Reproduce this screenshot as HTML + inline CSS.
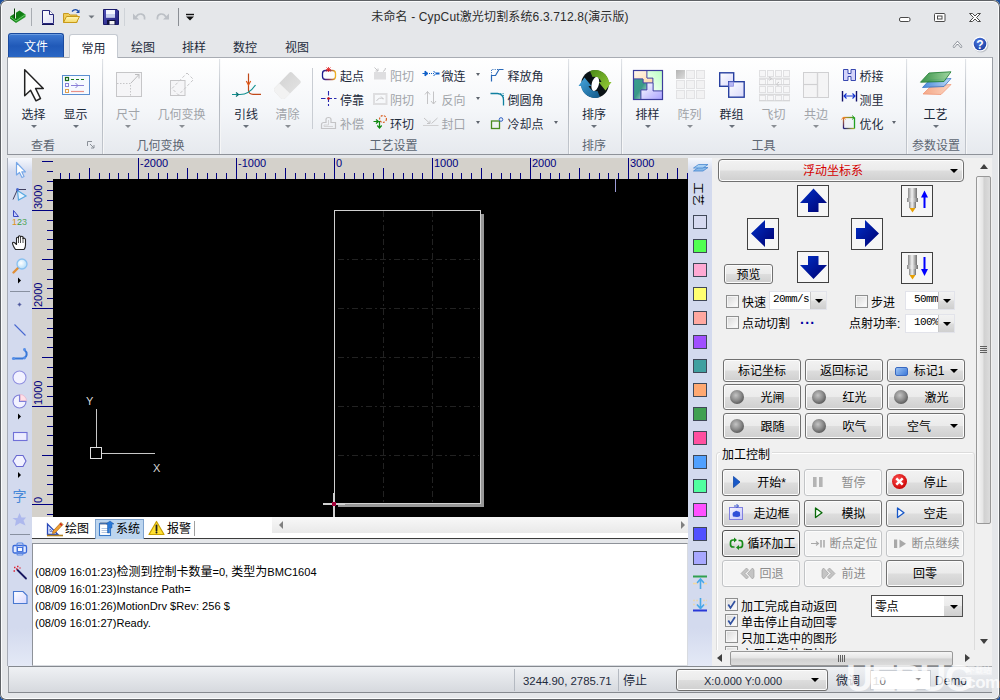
<!DOCTYPE html>
<html lang="zh-CN">
<head>
<meta charset="utf-8">
<title>未命名 - CypCut激光切割系统6.3.712.8(演示版)</title>
<style>
*{box-sizing:border-box;margin:0;padding:0}
html,body{width:1000px;height:700px;overflow:hidden}
body{position:relative;background:#1c4f9c;font-family:"Liberation Sans","Noto Sans CJK SC",sans-serif;font-size:12px;color:#1e2b3c;line-height:1}
.abs{position:absolute}
svg{display:block;overflow:visible}
#win{position:absolute;left:0;top:0;width:1000px;height:700px;background:#e5e7ea;border-radius:7px 7px 6px 6px;box-shadow:inset 0 0 0 1px #5f6266,inset 0 0 0 2px #fbfcfd}
#title{position:absolute;left:0;top:11px;width:1000px;text-align:center;font-size:12px;color:#2c2c2c;letter-spacing:.15px;white-space:nowrap}
.tab{position:absolute;top:34px;height:24px;width:48px;text-align:center;font-size:12px;line-height:28px;color:#1e2b3c;white-space:nowrap}
#tab-file{left:8px;top:33px;width:56px;height:25px;background:linear-gradient(#3f7ad2,#2059b8 50%,#2b68c6);border:1px solid #1a4a9e;border-bottom:none;border-radius:3px 3px 0 0;color:#fff;line-height:27px;box-shadow:inset 0 1px 0 #6a9be0}
#tab-home{z-index:2;left:69px;width:49px;background:#fff;border:1px solid #c5cad1;border-bottom:none;border-radius:3px 3px 0 0;height:24px}
#ribbon{position:absolute;left:7px;top:57px;width:986px;height:98px;background:linear-gradient(#ffffff,#f4f6f9 55%,#e6e9ee);border:1px solid #9a9ea5;border-top-color:#a8acb3;border-bottom-color:#8e9299}
.gsep{position:absolute;top:59px;width:2px;height:95px;background:linear-gradient(#e2e5e9,#b4b9c1 45%,#c2c6cd);border-right:1px solid rgba(255,255,255,.85)}
.glabel{position:absolute;top:139px;height:14px;text-align:center;font-size:12px;line-height:14px;color:#5d6672;white-space:nowrap}
.big{position:absolute;top:108px;height:14px;line-height:14px;text-align:center;font-size:12px;color:#1e2b3c;white-space:nowrap}
.dis{color:#a1a4a9 !important}
.arr{position:absolute;width:0;height:0;border:2.5px solid transparent;border-top:3px solid #5e646d;border-bottom:none}
.sm{position:absolute;height:14px;line-height:14px;font-size:12px;color:#1e2b3c;white-space:nowrap}
#ltool,#layerbar{position:absolute;top:158px;width:24px;height:508px;background:linear-gradient(#f6f8fd,#d3daee 14px,#d3daee 470px,#e4e9f6)}
#ltool{left:8px}
#layerbar{left:688px}
#tabsbar{position:absolute;left:32px;top:517px;width:656px;height:22px;background:#fff;border-bottom:1px solid #3c3c3c}
#log{position:absolute;left:32px;top:543px;width:656px;height:123px;background:#fff;border:1px solid #8e9299;border-right-color:#d8dbe0;border-bottom-color:#d8dbe0;font-size:11px;color:#000}
#log b{font-weight:normal;font-size:12px}
#log div{position:absolute;left:2px;font-size:11.1px;white-space:nowrap;height:13px;line-height:13px}
#rpanel{position:absolute;left:712px;top:158px;width:280px;height:508px;background:#f0f0f0;font-family:"Liberation Sans","Noto Sans CJK SC",sans-serif;color:#000}
#status{position:absolute;left:8px;top:666px;width:984px;height:27px;background:linear-gradient(#eff1f4,#d6d9de);border-top:1px solid #85898f;border-bottom:1px solid #85898f;border-left:1px solid #9a9ea4;color:#1e2b3c}
.btn{position:absolute;padding-top:1px;border:1px solid #707070;border-radius:3px;background:linear-gradient(#f2f2f2,#ebebeb 48%,#dddddd 52%,#cfcfcf);box-shadow:inset 0 0 0 1px #fcfcfc;text-align:center;font-size:12px;color:#000;white-space:nowrap}
.btn.off{border-color:#c2c4c6;background:#f4f4f4;color:#8c8c8c;box-shadow:inset 0 0 0 1px #fcfcfc}
.cb{position:absolute;width:13px;height:13px;border:1px solid #8e8f8f;background:linear-gradient(135deg,#d8d8d8,#ffffff);box-shadow:inset 0 0 0 1px #f4f4f4}
.lbl{position:absolute;font-size:12px;height:14px;line-height:14px;white-space:nowrap;color:#000}
.combo{position:absolute;background:#fff;border:1px solid #e2e3ea;font-family:"Liberation Mono",monospace;font-size:11px;letter-spacing:-0.6px;color:#000;white-space:nowrap;overflow:hidden}
.combo i{position:absolute;right:0;top:0;bottom:0;width:16px;background:linear-gradient(#f2f2f2,#ebebeb 48%,#dddddd 52%,#cfcfcf);border-left:1px solid #c8c8c8}
.dn{position:absolute;width:0;height:0;border:4px solid transparent;border-top:4px solid #000;border-bottom:none}
.sq{position:absolute;left:5px;width:14px;height:14px;border:1px solid #404858}
.jog{position:absolute;width:32px;height:32px;background:#f6f6f6;border:1px solid #404040}
.jog svg{position:absolute;left:-1px;top:-1px}
.led{position:absolute;width:14px;height:14px;border-radius:50%;background:radial-gradient(circle at 42% 38%,#c4c4c4,#8a8a8a 45%,#5a5a5a 75%,#484848)}
</style>
</head>
<body>
<div id="win">
<div id="title">未命名 - CypCut激光切割系统6.3.712.8(演示版)</div>
<div class="tab" id="tab-file">文件</div>
<div class="tab" id="tab-home">常用</div>
<div class="tab" style="left:119px">绘图</div>
<div class="tab" style="left:170px">排样</div>
<div class="tab" style="left:221px">数控</div>
<div class="tab" style="left:273px">视图</div>
<div id="ribbon"></div>
<!-- quick access toolbar + window controls -->
<svg class="abs" style="left:0;top:0" width="1000" height="58" viewBox="0 0 1000 58">
<defs>
<linearGradient id="gGreen" x1="0" y1="0" x2="1" y2="1"><stop offset="0" stop-color="#1e8a1e"/><stop offset=".5" stop-color="#0c7a10"/><stop offset="1" stop-color="#4cc04c"/></linearGradient>
<linearGradient id="gDoc" x1="0" y1="0" x2="1" y2="1"><stop offset="0" stop-color="#ffffff"/><stop offset="1" stop-color="#dcdcf4"/></linearGradient>
<linearGradient id="gFold" x1="0" y1="0" x2="0" y2="1"><stop offset="0" stop-color="#fff8b8"/><stop offset="1" stop-color="#f4d868"/></linearGradient>
<linearGradient id="gSave" x1="0" y1="0" x2="1" y2="1"><stop offset="0" stop-color="#5050b8"/><stop offset="1" stop-color="#20207a"/></linearGradient>
<radialGradient id="gHelp" cx=".4" cy=".3" r=".8"><stop offset="0" stop-color="#4a78e0"/><stop offset="1" stop-color="#1a3a9c"/></radialGradient>
</defs>
<!-- app icon -->
<path d="M10 16.500L19.500 10.500L25.500 14.500V17L16 23L10 18.500Z" fill="url(#gGreen)"/>
<path d="M10 16.500L16 21L25.500 14.500" fill="none" stroke="#7adc7a" stroke-width=".8"/>
<path d="M14.500 8.500V18" stroke="#0a3a0a" stroke-width="1"/><path d="M15.500 9V18.500" stroke="#e8f8e8" stroke-width="1"/>
<!-- sep -->
<path d="M31.500 8V26" stroke="#a8acb2"/>
<!-- new -->
<path d="M42.500 10.500H49.500L53.500 14.500V23.500H42.500Z" fill="url(#gDoc)" stroke="#26267a"/>
<path d="M49.500 10.500V14.500H53.500" fill="#fff" stroke="#26267a"/>
<path d="M42 24.500H54" stroke="#14145a"/>
<!-- open -->
<path d="M63.500 22.500V13.500H68.500L70 15H77V22.500Z" fill="#f0cc58" stroke="#c89a20"/>
<path d="M63.500 22.500L66.500 16.500H79.500L76.500 22.500Z" fill="url(#gFold)" stroke="#c89a18"/>
<path d="M72 11.500C74 9 77 9 78.500 11.500" fill="none" stroke="#1a4aa8" stroke-width="1.300"/><path d="M79.500 9.500V13H76Z" fill="#1a4aa8"/>
<path d="M88.500 15.500H94.500L91.500 18.500Z" fill="#70767e"/>
<!-- save -->
<path d="M103.500 9.500H117L118.500 11V24.500H103.500Z" fill="url(#gSave)" stroke="#1a1a6a"/>
<rect x="106" y="10" width="9" height="7.500" fill="#f4f6ff"/><path d="M106 14h9v3.500h-9z" fill="#c8d0f0"/>
<rect x="107" y="20" width="8.500" height="4.500" fill="#10103a"/><rect x="109.500" y="21" width="5" height="3.500" fill="#f4f4f4"/>
<!-- sep light -->
<path d="M124.500 8V26" stroke="#cfd3d8"/>
<!-- undo -->
<path d="M136 17C138.500 12.500 145.500 13 144.500 19.500" fill="none" stroke="#bcc0c6" stroke-width="1.700"/><path d="M133 13.500V19.500H139Z" fill="#bcc0c6"/>
<!-- redo -->
<path d="M166 17C163.500 12.500 156.500 13 157.500 19.500" fill="none" stroke="#bcc0c6" stroke-width="1.700"/><path d="M169 13.500V19.500H163Z" fill="#bcc0c6"/>
<!-- sep -->
<path d="M178.500 8V26" stroke="#8a8e94"/>
<!-- customize -->
<path d="M186 14.500H194" stroke="#111" stroke-width="1.400"/><path d="M186 16.500H194L190 20.500Z" fill="#111"/>
<!-- window controls -->
<rect x="899.500" y="17.500" width="10.500" height="4" rx="1.500" fill="#fff" stroke="#4a4a4a"/>
<rect x="934.500" y="13.500" width="10.500" height="8" rx="1" fill="#fff" stroke="#4a4a4a"/><rect x="937.500" y="16" width="4.500" height="3" fill="#fff" stroke="#4a4a4a"/>
<path d="M969.500 13.500H972.500L975 16L977.500 13.500H980.500L976.500 17.500L980.500 21.500H977.500L975 19L972.500 21.500H969.500L973.500 17.500Z" fill="#fff" stroke="#4a4a4a" stroke-linejoin="round"/>
<!-- collapse -->
<path d="M954 46.500L957.500 42.500L961 46.500" fill="none" stroke="#8a9098" stroke-width="2.600" stroke-linejoin="round" stroke-linecap="round"/><path d="M954 46.500L957.500 42.500L961 46.500" fill="none" stroke="#fff" stroke-width="1.100" stroke-linejoin="round" stroke-linecap="round"/>
<!-- help -->
<circle cx="981" cy="45" r="7.500" fill="#9aa0aa" opacity=".5"/>
<circle cx="980" cy="44" r="7.500" fill="#fff"/><circle cx="980" cy="44" r="6.300" fill="url(#gHelp)"/>
<text x="980" y="48.500" text-anchor="middle" font-family="Liberation Sans, sans-serif" font-weight="bold" font-size="12" fill="#fff">?</text>
</svg>
<div class="gsep" style="left:102px"></div>
<div class="gsep" style="left:219px"></div>
<div class="gsep" style="left:568px"></div>
<div class="gsep" style="left:621px"></div>
<div class="gsep" style="left:906px"></div>
<div class="gsep" style="left:965px"></div>
<div class="abs" style="left:312px;top:68px;width:1px;height:61px;background:#c9cdd3"></div>
<div class="glabel" style="left:3px;width:80px">查看</div>
<div class="glabel" style="left:120.5px;width:80px">几何变换</div>
<div class="glabel" style="left:353.5px;width:80px">工艺设置</div>
<div class="glabel" style="left:554px;width:80px">排序</div>
<div class="glabel" style="left:723.5px;width:80px">工具</div>
<div class="glabel" style="left:896px;width:80px">参数设置</div>
<div class="big" style="left:-1.5px;width:70px">选择</div>
<div class="arr" style="left:30.5px;top:125px;border-width:3px 3px 0 3px;border-top-color:#6a717b"></div>
<div class="big" style="left:40.5px;width:70px">显示</div>
<div class="arr" style="left:72.5px;top:125px;border-width:3px 3px 0 3px;border-top-color:#6a717b"></div>
<div class="big dis" style="left:93px;width:70px">尺寸</div>
<div class="arr" style="left:125px;top:125px;border-width:3px 3px 0 3px;border-top-color:#8a8e94"></div>
<div class="big dis" style="left:146.5px;width:70px">几何变换</div>
<div class="arr" style="left:178.5px;top:125px;border-width:3px 3px 0 3px;border-top-color:#8a8e94"></div>
<div class="big" style="left:211px;width:70px">引线</div>
<div class="arr" style="left:243px;top:125px;border-width:3px 3px 0 3px;border-top-color:#6a717b"></div>
<div class="big dis" style="left:252.5px;width:70px">清除</div>
<div class="arr" style="left:284.5px;top:125px;border-width:3px 3px 0 3px;border-top-color:#8a8e94"></div>
<div class="big" style="left:559px;width:70px">排序</div>
<div class="arr" style="left:591px;top:125px;border-width:3px 3px 0 3px;border-top-color:#6a717b"></div>
<div class="big" style="left:612.5px;width:70px">排样</div>
<div class="arr" style="left:644.5px;top:125px;border-width:3px 3px 0 3px;border-top-color:#6a717b"></div>
<div class="big dis" style="left:654.5px;width:70px">阵列</div>
<div class="arr" style="left:686.5px;top:125px;border-width:3px 3px 0 3px;border-top-color:#8a8e94"></div>
<div class="big" style="left:696.5px;width:70px">群组</div>
<div class="arr" style="left:728.5px;top:125px;border-width:3px 3px 0 3px;border-top-color:#6a717b"></div>
<div class="big dis" style="left:738.5px;width:70px">飞切</div>
<div class="arr" style="left:770.5px;top:125px;border-width:3px 3px 0 3px;border-top-color:#8a8e94"></div>
<div class="big dis" style="left:781px;width:70px">共边</div>
<div class="arr" style="left:813px;top:125px;border-width:3px 3px 0 3px;border-top-color:#8a8e94"></div>
<div class="big" style="left:900.5px;width:70px">工艺</div>
<div class="arr" style="left:932.5px;top:125px;border-width:3px 3px 0 3px;border-top-color:#6a717b"></div>
<div class="sm" style="left:340px;top:70px">起点</div>
<div class="sm" style="left:340px;top:94px">停靠</div>
<div class="sm dis" style="left:340px;top:118px">补偿</div>
<div class="sm dis" style="left:390px;top:70px">阳切</div>
<div class="sm dis" style="left:390px;top:94px">阴切</div>
<div class="sm" style="left:390px;top:118px">环切</div>
<div class="sm" style="left:441.5px;top:70px">微连</div>
<div class="arr" style="left:476px;top:73px"></div>
<div class="sm dis" style="left:441.5px;top:94px">反向</div>
<div class="arr" style="left:476px;top:97px"></div>
<div class="sm dis" style="left:441.5px;top:118px">封口</div>
<div class="arr" style="left:476px;top:121px"></div>
<div class="sm" style="left:507.5px;top:70px">释放角</div>
<div class="sm" style="left:507.5px;top:94px">倒圆角</div>
<div class="sm" style="left:507.5px;top:118px">冷却点</div>
<div class="arr" style="left:554px;top:121px"></div>
<div class="sm" style="left:859.5px;top:70px">桥接</div>
<div class="sm" style="left:859.5px;top:94px">测里</div>
<div class="sm" style="left:859.5px;top:118px">优化</div>
<div class="arr" style="left:892px;top:121px"></div>
<svg class="abs" style="left:87px;top:141px" width="8" height="8" viewBox="0 0 8 8"><path d="M0.500 5V0.500H5" stroke="#8a9098" fill="none"/><path d="M3 3L7 7M7 4V7H4" stroke="#8a9098" fill="none"/></svg>
<svg class="abs" style="left:0;top:58px" width="1000" height="96" viewBox="0 58 1000 96">
<defs>
<linearGradient id="rStart" x1="0" y1="0" x2="1" y2="0"><stop offset="0" stop-color="#1a1a90"/><stop offset=".5" stop-color="#803060"/><stop offset="1" stop-color="#f0b020"/></linearGradient>
<linearGradient id="rEr" x1="0" y1="0" x2="1" y2="1"><stop offset="0" stop-color="#d0d0d0"/><stop offset="1" stop-color="#e6e6e6"/></linearGradient>
<linearGradient id="rPeach" x1="1" y1="1" x2="0" y2="0"><stop offset="0" stop-color="#ffd8a8"/><stop offset="1" stop-color="#fff8f0"/></linearGradient>
<linearGradient id="rLg" x1="1" y1="0" x2="0" y2="1"><stop offset="0" stop-color="#b8ffc0"/><stop offset="1" stop-color="#ffffff"/></linearGradient>
<linearGradient id="rTeal" x1="0" y1="0" x2="1" y2="1"><stop offset="0" stop-color="#38a090"/><stop offset=".5" stop-color="#3a9888"/><stop offset="1" stop-color="#d8f0e8"/></linearGradient>
<linearGradient id="rLav" x1="1" y1="1" x2="0" y2="0"><stop offset="0" stop-color="#a8a0ff"/><stop offset="1" stop-color="#ffffff"/></linearGradient>
<linearGradient id="rGrp" x1="0" y1="0" x2="1" y2="1"><stop offset="0" stop-color="#ffffff"/><stop offset="1" stop-color="#d8d8fa"/></linearGradient>
<linearGradient id="rArr" x1="0" y1="0" x2="1" y2="1"><stop offset="0" stop-color="#b4b4b4"/><stop offset="1" stop-color="#dcdcdc"/></linearGradient>
<linearGradient id="rOptT" gradientUnits="userSpaceOnUse" x1="843" y1="0" x2="855" y2="0"><stop offset="0" stop-color="#f08020"/><stop offset="1" stop-color="#20a020"/></linearGradient>
<linearGradient id="rOptL" gradientUnits="userSpaceOnUse" x1="0" y1="117" x2="0" y2="129"><stop offset="0" stop-color="#f08020"/><stop offset="1" stop-color="#101080"/></linearGradient>
<linearGradient id="rOptB" gradientUnits="userSpaceOnUse" x1="843" y1="0" x2="855" y2="0"><stop offset="0" stop-color="#101080"/><stop offset="1" stop-color="#c0c020"/></linearGradient>
<linearGradient id="rGre" x1="0" y1="0" x2="1" y2="0"><stop offset="0" stop-color="#2a8a3a"/><stop offset="1" stop-color="#9ad49a"/></linearGradient>
<linearGradient id="rBlu" x1="0" y1="0" x2="1" y2="0"><stop offset="0" stop-color="#3a80d8"/><stop offset="1" stop-color="#b8d8f8"/></linearGradient>
<linearGradient id="rSal" x1="0" y1="0" x2="1" y2="0"><stop offset="0" stop-color="#f4a888"/><stop offset="1" stop-color="#fcd4c0"/></linearGradient>
<linearGradient id="rSortG" x1="0" y1="0" x2="1" y2="1"><stop offset="0" stop-color="#4a8a18"/><stop offset="1" stop-color="#9ad038"/></linearGradient>
<linearGradient id="rSortB" x1="0" y1="0" x2="1" y2="1"><stop offset="0" stop-color="#48a8e0"/><stop offset="1" stop-color="#105888"/></linearGradient>
</defs>
<!-- select cursor -->
<path d="M24.700 69.700V95.800L30.600 90.300L36 100.800L40.500 98.500L35.600 88.500H43.300Z" fill="#fff" stroke="#222" stroke-width="1.500" stroke-linejoin="round"/>
<!-- display -->
<rect x="62.500" y="75.500" width="27" height="19" fill="#f6faff" stroke="#5b8fd0"/>
<rect x="65.500" y="77.500" width="3" height="3" fill="none" stroke="#1a6a1a" stroke-width="1.200"/><path d="M71 79.500H84" stroke="#1a7a1a" stroke-width="1.200" stroke-dasharray="3 2"/>
<rect x="65.500" y="83.500" width="3" height="3" fill="none" stroke="#8a80d8"/><path d="M71 85.500H84M75.500 83L78 85.500L75.500 88" stroke="#8a80d8" fill="none"/>
<rect x="65.500" y="89.500" width="3" height="3" fill="none" stroke="#e0a050"/><path d="M71 91.500H84" stroke="#e89088" stroke-width="1.200"/>
<!-- size (disabled) -->
<rect x="116.500" y="72.500" width="25" height="24" fill="#f5f5f7" stroke="#c6c6c8"/>
<path d="M117 83.500H130.500V96" fill="none" stroke="#c6c6c8" stroke-dasharray="1.500 1.500"/>
<path d="M131 83L139 74.500M135 74.500H139V78.500" fill="none" stroke="#bcbcbe"/>
<!-- geometric transform (disabled) -->
<rect x="170.500" y="80.500" width="14.500" height="15" fill="#f5f5f7" stroke="#c6c6c8"/>
<path d="M187 73L193.500 79.500L178.500 95L172 88.500Z" fill="none" stroke="#c6c6c8" stroke-dasharray="3 2"/>
<!-- lead line -->
<path d="M248.500 73.500V90.500Q249 94.300 253 94.300H261" fill="none" stroke="#c04818" stroke-width="1.200"/><path d="M246.300 81L248.500 85L250.700 81" fill="none" stroke="#e05818" stroke-width="1.200"/>
<path d="M232 94.500H240Q249 94.500 255.500 85" fill="none" stroke="#109090" stroke-width="1.200"/><path d="M236 92.500L238.500 94.500L236 96.500" fill="none" stroke="#0a7070" stroke-width="1.200"/>
<!-- eraser (disabled) -->
<path d="M289.500 72.600Q290.800 71.400 292 72.600L300.300 80.800Q301.500 82 300.300 83.200L285.500 98Q283 100 280.500 98L275 92Q273 89.500 275 87.500Z" fill="url(#rEr)"/>
<path d="M279.300 83.200L290 93.600L285.500 98Q283 100 280.500 98L275 92Q273 89.500 275 87.500Z" fill="#f2f2f2"/>
<!-- start point -->
<rect x="322.500" y="70.500" width="13" height="9" rx="3" fill="none" stroke="url(#rStart)" stroke-width="1.300"/>
<path d="M326.500 67.500L330.500 71.500M330.500 67.500L326.500 71.500M328.500 67V72M326 69.500H331" stroke="#e02020" stroke-width=".8"/>
<!-- dock -->
<path d="M321 98.500H336.500M328.500 91V106" stroke="#2828b0" stroke-width="1.100" stroke-dasharray="4.500 2"/><circle cx="328.500" cy="98.500" r="1.300" fill="#d01010"/>
<!-- compensate (disabled) -->
<path d="M321.500 128.500V124.500Q321.500 122.500 324 122.500H326V119.500Q326 117.500 328.500 117.500Q331 117.500 331 119.500V122.500H335.500V128.500Z" fill="none" stroke="#c4c4c6" stroke-width="1.200"/>
<path d="M324 126.500V125H328.500V120M333 126.500H324" fill="none" stroke="#d4d4d6" stroke-width="1"/>
<!-- outer cut (disabled) -->
<rect x="374" y="72" width="12" height="7.500" fill="#dedee0"/><path d="M374.500 67.500L378 71M378 68.500V71H375.500M383 71.500Q385.500 70.500 385.500 68" fill="none" stroke="#c4c4c6"/>
<!-- inner cut (disabled) -->
<rect x="374" y="94" width="12.500" height="10" fill="none" stroke="#dedee0" stroke-width="2"/><path d="M376.500 101Q379 96.500 383.500 99M381 96.500L383.500 99" fill="none" stroke="#c8c8ca"/>
<!-- ring cut -->
<circle cx="383" cy="119" r="3.400" fill="none" stroke="#d85818" stroke-width="1.100" stroke-dasharray="2 1.300"/>
<path d="M373.500 121.500H378M376 119.500L378.500 121.500L376 123.500M379.500 121V127.500M377.300 125.500L379.500 128L381.700 125.500" fill="none" stroke="#108a10" stroke-width="1.200"/>
<!-- micro joint -->
<path d="M422.500 73.500H425M425 71L428 73.500L425 76Z" fill="#1060c8" stroke="#1060c8"/><path d="M429 73.500H434" stroke="#1060c8" stroke-dasharray="1 1"/><path d="M433.500 71L436 73.500L433.500 76" fill="none" stroke="#1060c8"/><path d="M436 73.500H439.500" stroke="#1060c8" stroke-width="2"/>
<!-- reverse (disabled) -->
<path d="M427.500 104V91.500M425 94.500L427.500 91.500L430 94.500M433.500 91.500V104M431 101L433.500 104L436 101" fill="none" stroke="#c4c4c6"/>
<!-- seal (disabled) -->
<path d="M423 125.500H438.500" stroke="#d0d0d2"/><path d="M424 118L430 123.500M430 120.500V123.500H427M437.500 118L431.500 123.500" fill="none" stroke="#c4c4c6"/>
<!-- release angle -->
<path d="M491.500 75.500V69.500H499" fill="none" stroke="#2868b8" stroke-dasharray="1 1.300"/><path d="M491.500 81.500V75.500H495.500L499 69.500H503.500" fill="none" stroke="#2868b8" stroke-width="1.200"/>
<!-- fillet -->
<path d="M498 93.500H503.500V99" fill="none" stroke="#1888a8" stroke-dasharray="1 1.300"/><path d="M490.500 93.500H497.500Q503.500 94 503.500 100V105.500" fill="none" stroke="#1080a0" stroke-width="1.300"/>
<!-- cooling point -->
<rect x="491.500" y="121" width="8" height="7.500" fill="none" stroke="#4a8a20" stroke-width="1.300"/><circle cx="501" cy="119.500" r="1.800" fill="#e8f0ff" stroke="#3060c0"/>
<!-- sort -->
<circle cx="595" cy="84" r="13.800" fill="#0a1216"/>
<path d="M590 71A14 14 0 0 1 609 82H611.500L605.500 90.500L598.500 82H601.500A8 8 0 0 0 592.500 77Z" fill="url(#rSortG)"/>
<path d="M600 97A14 14 0 0 1 581 86H578.500L584.500 77.500L591.500 86H588.500A8 8 0 0 0 597.500 91Z" fill="url(#rSortB)"/>
<ellipse cx="595.300" cy="84" rx="3.600" ry="7.200" fill="#fff" transform="rotate(14 595.300 84)"/>
<!-- nest -->
<rect x="633.500" y="70.500" width="29" height="29" fill="#fff"/>
<path d="M633.500 70.500H647V78H653V83H643V79H633.500Z" fill="url(#rPeach)" stroke="#4848a8" stroke-width=".8"/>
<path d="M647 70.500H662.500V91H653V78H647Z" fill="url(#rLg)" stroke="#4848a8" stroke-width=".8"/>
<path d="M633.500 79H643V83H647V90H641V99.500H633.500Z" fill="url(#rTeal)" stroke="#4848a8" stroke-width=".8"/>
<path d="M647 83H653V91H662.500V99.500H641V90H647Z" fill="url(#rLav)" stroke="#4848a8" stroke-width=".8"/>
<rect x="633.500" y="70.500" width="29" height="29" fill="none" stroke="#3c3c9c" stroke-width="1.200"/>
<!-- array (disabled) -->
<g fill="#f2f2f3" stroke="#e2e2e4"><rect x="686.500" y="70.500" width="8" height="8"/><rect x="696.500" y="70.500" width="8" height="8"/><rect x="676.500" y="80.500" width="8" height="8"/><rect x="686.500" y="80.500" width="8" height="8"/><rect x="696.500" y="80.500" width="8" height="8"/><rect x="676.500" y="90.500" width="8" height="8"/><rect x="686.500" y="90.500" width="8" height="8"/><rect x="696.500" y="90.500" width="8" height="8"/></g>
<rect x="676" y="70" width="9" height="9" fill="url(#rArr)"/>
<!-- group -->
<rect x="719.700" y="72.800" width="14" height="13.500" fill="url(#rGrp)" stroke="#2840a0" stroke-width="1.400"/>
<rect x="728.700" y="81.700" width="15.500" height="15.500" fill="url(#rGrp)" stroke="#2840a0" stroke-width="1.400"/>
<rect x="729" y="82" width="4.500" height="4.200" fill="#b8b8f4" stroke="#8888e0" stroke-width=".8"/>
<!-- fly cut (disabled) -->
<g fill="#f6f6f7" stroke="#e0e0e2"><rect x="759.500" y="70.500" width="6" height="6"/><rect x="767.500" y="70.500" width="6" height="6"/><rect x="775.500" y="70.500" width="6" height="6"/><rect x="783.500" y="70.500" width="6" height="6"/><rect x="759.500" y="79.500" width="6" height="5"/><rect x="767.500" y="79.500" width="6" height="5"/><rect x="775.500" y="79.500" width="6" height="5"/><rect x="783.500" y="79.500" width="6" height="5"/><rect x="759.500" y="86.500" width="6" height="6"/><rect x="767.500" y="86.500" width="6" height="6"/><rect x="775.500" y="86.500" width="6" height="6"/><rect x="783.500" y="86.500" width="6" height="6"/><rect x="759.500" y="95.500" width="6" height="5"/><rect x="767.500" y="95.500" width="6" height="5"/><rect x="775.500" y="95.500" width="6" height="5"/><rect x="783.500" y="95.500" width="6" height="5"/></g>
<path d="M759 78.200H790M759 84.800H790M759 94.300H790M759 100.800H790" stroke="#d2d2d4" stroke-width="1"/><path d="M769 77L771.500 78.500L769.500 80.500M779 82L776.500 84L778.500 86" fill="none" stroke="#c8c8ca"/>
<!-- common edge (disabled) -->
<rect x="803.500" y="72.500" width="25" height="25" fill="#f4f4f5" stroke="#d0d0d2"/><path d="M817.500 72.500V97.500" stroke="#d4d4d6" stroke-width="1.400"/><path d="M803.500 84.500H817" stroke="#d0d0d2" stroke-width="1.200"/>
<!-- bridge -->
<path d="M843.500 69.500H848V73.500H851V69.500H855.500V80.500H851V76.500H848V80.500H843.500Z" fill="#d4d4fa" stroke="#3848b0"/>
<!-- measure -->
<path d="M842.500 91V101.500M856.500 91V101.500" stroke="#10106a" stroke-width="1.400"/><path d="M844 96H855M846.500 93.500L844 96L846.500 98.500M852.500 93.500L855 96L852.500 98.500" fill="none" stroke="#1030d0" stroke-width="1.100"/>
<!-- optimize -->
<path d="M843.500 117.500H854" stroke="url(#rOptT)" stroke-width="1.300"/><path d="M843.500 117.500V128.500" stroke="url(#rOptL)" stroke-width="1.300"/><path d="M843.500 128.500H854.500" stroke="url(#rOptB)" stroke-width="1.300"/><path d="M854.500 117.500V128.500" stroke="#20a020" stroke-width="1.300"/>
<path d="M841.500 119.500L843.500 117L845.500 119.500" fill="none" stroke="#f08020" stroke-width=".9"/><path d="M852 115.500L854.500 117.500L852 119.500" fill="none" stroke="#20a020" stroke-width=".9"/>
<!-- process -->
<path d="M923 94L931 86L951 84.500L941 94.500Z" fill="url(#rSal)" stroke="#f09878" stroke-width=".8"/>
<path d="M922.500 87.500L929.500 80L951 78.500L944 86.500Z" fill="url(#rBlu)" stroke="#2868c0" stroke-width=".8" opacity=".92"/>
<path d="M920.500 82.200L929 73L951 71.800L944 81.500Z" fill="url(#rGre)" stroke="#1a7a2a" stroke-width=".9" opacity=".92"/>
</svg>
<svg id="cv" class="abs" style="left:32px;top:158px" width="656" height="360" viewBox="32 158 656 360" shape-rendering="crispEdges">
<rect x="32" y="158" width="656" height="360" fill="#d4d1cb"/>
<rect x="53" y="179" width="635" height="339" fill="#000"/>
<path d="M60.5 173V179M69.5 173V179M79.5 173V179M89.5 168V179M99.5 173V179M109.5 173V179M118.5 173V179M128.5 173V179M138.5 158V179M148.5 173V179M158.5 173V179M167.5 173V179M177.5 173V179M187.5 168V179M197.5 173V179M207.5 173V179M216.5 173V179M226.5 173V179M236.5 158V179M246.5 173V179M256.5 173V179M265.5 173V179M275.5 173V179M285.5 168V179M295.5 173V179M305.5 173V179M314.5 173V179M324.5 173V179M334.5 158V179M344.5 173V179M354.5 173V179M363.5 173V179M373.5 173V179M383.5 168V179M393.5 173V179M403.5 173V179M412.5 173V179M422.5 173V179M432.5 158V179M442.5 173V179M452.5 173V179M461.5 173V179M471.5 173V179M481.5 168V179M491.5 173V179M501.5 173V179M510.5 173V179M520.5 173V179M530.5 158V179M540.5 173V179M550.5 173V179M559.5 173V179M569.5 173V179M579.5 168V179M589.5 173V179M599.5 173V179M608.5 173V179M618.5 173V179M628.5 158V179M638.5 173V179M648.5 173V179M657.5 173V179M667.5 173V179M677.5 168V179M687.5 173V179" stroke="#000080" stroke-width="1" fill="none"/>
<path d="M47 514.5H53M32 504.5H53M47 494.5H53M47 484.5H53M47 475.5H53M47 465.5H53M42 455.5H53M47 445.5H53M47 435.5H53M47 426.5H53M47 416.5H53M32 406.5H53M47 396.5H53M47 386.5H53M47 377.5H53M47 367.5H53M42 357.5H53M47 347.5H53M47 337.5H53M47 328.5H53M47 318.5H53M32 308.5H53M47 298.5H53M47 288.5H53M47 279.5H53M47 269.5H53M42 259.5H53M47 249.5H53M47 239.5H53M47 230.5H53M47 220.5H53M32 210.5H53M47 200.5H53M47 190.5H53M47 181.5H53M47 171.5H53M42 161.5H53" stroke="#000080" stroke-width="1" fill="none"/>
<g font-family="Liberation Sans, sans-serif" font-size="11" fill="#000080" shape-rendering="auto">
<text x="140" y="167">-2000</text>
<text x="238" y="167">-1000</text>
<text x="336" y="167">0</text>
<text x="434" y="167">1000</text>
<text x="532" y="167">2000</text>
<text x="630" y="167">3000</text>
<text transform="translate(42 209) rotate(-90)">3000</text>
<text transform="translate(42 307) rotate(-90)">2000</text>
<text transform="translate(42 405) rotate(-90)">1000</text>
<text transform="translate(42 503) rotate(-90)">0</text>
</g>
<path d="M480.500 214h3.500v292.500H338v-3.500h142.500z" fill="#989898"/>
<rect x="334.5" y="210.5" width="146" height="293" fill="#000" stroke="#d0d0d0" stroke-width="1"/>
<path d="M383.5 211V503M432.5 211V503M338 259.5H479M338 308.5H479M338 357.5H479M338 406.5H479M338 455.5H479" stroke="#222222" stroke-width="1" stroke-dasharray="6 3 2 3" fill="none"/>
<path d="M323 504H345M334 493V517" stroke="#d0d0d0" stroke-width="2" fill="none"/>
<rect x="332" y="502" width="4" height="4" fill="#a00038"/>
<path d="M615.5 179V192" stroke="#9c9cd8" stroke-width="1"/>
<path d="M96.5 409V448M101 453.5H155" stroke="#c8c8c8" stroke-width="1" fill="none"/>
<rect x="90.5" y="447.5" width="11" height="11" fill="none" stroke="#e0e0e0"/>
<g font-family="Liberation Sans, sans-serif" font-size="11" fill="#d8d8d8" shape-rendering="auto"><text x="86" y="405">Y</text><text x="153" y="472">X</text></g>
</svg>
<div id="ltool"></div>
<div id="layerbar">
<div class="sq" style="top:57px;background:#d6daf0"></div>
<div class="sq" style="top:81px;background:#50ff50"></div>
<div class="sq" style="top:105px;background:#ffaad4"></div>
<div class="sq" style="top:129px;background:#ffff70"></div>
<div class="sq" style="top:153px;background:#ffa8a0"></div>
<div class="sq" style="top:177px;background:#a050ff"></div>
<div class="sq" style="top:201px;background:#40a0a0"></div>
<div class="sq" style="top:225px;background:#ffa870"></div>
<div class="sq" style="top:249px;background:#40a050"></div>
<div class="sq" style="top:273px;background:#ff50a0"></div>
<div class="sq" style="top:297px;background:#50a0ff"></div>
<div class="sq" style="top:321px;background:#50ffa0"></div>
<div class="sq" style="top:345px;background:#ff50ff"></div>
<div class="sq" style="top:369px;background:#5050ff"></div>
<div class="sq" style="top:393px;background:#a8a8ff"></div>
</div>
<div id="tabsbar">
<div class="abs" style="left:63px;top:2px;width:49px;height:20px;background:#bcd5ef;border:1px solid #7da2ce;border-bottom:none"></div>
<div class="abs" style="left:240px;top:0;width:416px;height:16px;background:linear-gradient(#f8f8f8,#e9e9e9)"></div>
<div class="lbl" style="left:33px;top:5px;font-size:12px">绘图</div>
<div class="lbl" style="left:84px;top:5px;font-size:12px">系统</div>
<div class="lbl" style="left:135px;top:5px;font-size:12px">报警</div>
<div class="abs" style="left:162px;top:4px;width:1px;height:15px;background:#a0a0a0"></div>
<div class="abs" style="left:247px;top:4px;width:0;height:0;border:4px solid transparent;border-right:4px solid #808080;border-left:none"></div>
<div class="abs" style="left:649px;top:4px;width:0;height:0;border:4px solid transparent;border-left:4px solid #808080;border-right:none"></div>
</div>
<div id="log">
<div style="top:22px">(08/09 16:01:23)<b>检测到控制卡数量</b>=0, <b>类型为</b>BMC1604</div>
<div style="top:39px">(08/09 16:01:23)Instance Path=</div>
<div style="top:56px">(08/09 16:01:26)MotionDrv $Rev: 256 $</div>
<div style="top:73px">(08/09 16:01:27)Ready.</div>
</div>
<svg class="abs" style="left:0;top:158px" width="720" height="510" viewBox="0 158 720 510">
<defs>
<linearGradient id="tLav" x1="0" y1="0" x2="1" y2="1"><stop offset="0" stop-color="#ffffff"/><stop offset="1" stop-color="#d8d8ff"/></linearGradient>
<radialGradient id="tLens" cx=".4" cy=".4" r=".7"><stop offset="0" stop-color="#ffffff"/><stop offset="1" stop-color="#a8d8f8"/></radialGradient>
</defs>
<!-- left toolbar edge -->
<path d="M7.500 158V666" stroke="#a8adb8"/>
<!-- cursor -->
<path d="M16.500 162.500V175L19.500 172.500L22 177.500L24 176.500L21.800 171.800H25.500Z" fill="#fff" stroke="#78a8e8" stroke-width="1.200" stroke-linejoin="round"/>
<!-- node edit -->
<path d="M17.500 190.500L26 196L18.500 200Z" fill="#e8f4ff" stroke="#58a8e0" stroke-width="1.200"/><path d="M13 199.500L17.500 189.500H26" fill="none" stroke="#404060" stroke-width="1"/><circle cx="17.500" cy="189.500" r="1.500" fill="#4868d0"/>
<!-- 123 -->
<path d="M13.500 210.500V216.500L18.500 216.500Z" fill="#c8d0ff" stroke="#3848c0" stroke-width="1"/>
<text x="12" y="225" font-family="Liberation Sans, sans-serif" font-size="9" fill="#e09020">1<tspan fill="#40a040">2</tspan><tspan fill="#58a860">3</tspan></text>
<!-- hand -->
<path d="M15.500 249.500Q12.500 245 12.500 243Q13 241.500 15 243L16.500 244.500V238Q17.500 236.500 18.500 238V236.500Q19.500 235 20.500 236.500V237Q21.500 235.500 23 237V238.500Q24.500 237.500 25.500 239.500V245Q25.500 247.500 24 249.500Z" fill="#fff" stroke="#222" stroke-width="1.100" stroke-linejoin="round"/>
<path d="M18.500 238V243M20.500 237V243M23 238V243" stroke="#222" stroke-width=".8"/>
<!-- magnifier -->
<path d="M13.500 272.500L19 267" stroke="#e09038" stroke-width="2.400" stroke-linecap="round"/><circle cx="22" cy="264" r="5" fill="url(#tLens)" stroke="#88c0f0" stroke-width="1.300"/>
<path d="M18 277.500V283.500L21 280.500Z" fill="#000"/>
<path d="M10 291.500H30" stroke="#8890a0"/>
<!-- dot -->
<rect x="18.500" y="303.500" width="2" height="2" fill="#18186a"/><path d="M19.500 302.500V306.500M17.500 304.500H21.500" stroke="#5060a8" stroke-width=".6"/>
<!-- line -->
<path d="M14.500 324.500L25.500 335.500" stroke="#4868d0" stroke-width="1.100"/>
<!-- arc -->
<path d="M13.500 358.500H22.500Q27.500 357.500 26.500 352.500L24.500 350" fill="none" stroke="#3878d8" stroke-width="2" stroke-linecap="round"/><circle cx="13.500" cy="358.500" r="1.600" fill="#5890e8"/><circle cx="24.500" cy="358" r="1.400" fill="#5890e8"/><circle cx="24.500" cy="349.500" r="1.400" fill="#5890e8"/>
<!-- circle -->
<circle cx="19.500" cy="377.500" r="6.500" fill="#f2f2ff" stroke="#9090e0" stroke-width="1.100"/>
<!-- pie -->
<path d="M19.500 401.500V395A6.500 6.500 0 1 0 26 401.500Z" fill="#f2f2ff" stroke="#8080d8" stroke-width="1.100"/><path d="M20.500 400.500V394.500A6.500 6.500 0 0 1 26.500 400.500Z" fill="#ffe0e8" stroke="#e8b0c8" stroke-width=".7"/>
<path d="M18 413.500V419.500L21 416.500Z" fill="#000"/>
<!-- rect -->
<rect x="13.500" y="432.500" width="13.500" height="8" fill="#ececff" stroke="#7070d8" stroke-width="1.100"/>
<!-- hexagon -->
<path d="M13 461L16.500 455.500H23L26 461L23 466.500H16.500Z" fill="#f2f2ff" stroke="#6868d0" stroke-width="1.100"/>
<path d="M18 472V478L21 475Z" fill="#000"/>
<!-- text -->
<text x="19.500" y="501" text-anchor="middle" font-family="Liberation Sans, Noto Sans CJK SC, sans-serif" font-size="14" fill="#4888d8">字</text>
<!-- star (disabled) -->
<path d="M19.500 513L21.500 517.500H26L23.500 520.500L25.500 525.500L20 523L15 526L16 520.500L12.500 518H17.500Z" fill="#a8b4ec" opacity=".9"/>
<path d="M10 534.500H30" stroke="#8890a0"/>
<!-- group -->
<rect x="13" y="545.500" width="13.500" height="7.500" rx="1.500" fill="#e0e8ff" stroke="#3868d8" stroke-width="1.300"/><rect x="17" y="543" width="6" height="12" rx="1" fill="none" stroke="#5888e8" stroke-width="1.100"/><rect x="17.500" y="547.500" width="5" height="4" fill="#f4f8ff" stroke="#3868d8" stroke-width=".9"/>
<!-- wand -->
<path d="M17.500 570L26 578.500" stroke="#181860" stroke-width="1.800" stroke-linecap="round"/><path d="M14 567.500h1.500M17 566.500h1.500M13.500 571h1.500M16 569h1.500M19.500 568h1" stroke="#e02030" stroke-width="1.300"/>
<!-- page -->
<path d="M13.500 591.500H23L27 595.500V603.500H13.500Z" fill="url(#tLav)" stroke="#4878d0" stroke-width="1.100"/>
<!-- layer bar icons -->
<path d="M693.500 171L698.500 167.500H708L703 171Z" fill="#88b8e8" stroke="#4888d0" stroke-width=".8"/><path d="M693.500 168L698.500 164.500H708L703 168Z" fill="#a8d0f4" stroke="#4888d0" stroke-width=".8"/>
<text transform="translate(693.500 182.500) rotate(90)" font-family="Liberation Sans, Noto Sans CJK SC, sans-serif" font-size="11.500" fill="#000">工艺</text>
<path d="M693 576.500H707" stroke="#30a050" stroke-width="2"/><path d="M700.500 589V579.500M697 583L700.500 579L704 583" fill="none" stroke="#48a8e8" stroke-width="1.600"/><path d="M693 583.500H697M704 583.500H707" stroke="#f4d8a0" stroke-width="1.400"/>
<path d="M693 610.500H707" stroke="#2838d8" stroke-width="2"/><path d="M700.500 598V608M697 604.500L700.500 608.500L704 604.500" fill="none" stroke="#48a8e8" stroke-width="1.600"/><path d="M693 600.500H698M703 600.500H707M693 604.500H696M705 604.500H707" stroke="#e8d8b0" stroke-width="1.300" stroke-dasharray="2 1"/>
<!-- tab icons -->
<path d="M47.500 534.500V524L58 534.500Z" fill="#d8e4ff" stroke="#2848b8" stroke-width="1.300"/><path d="M50 531.500V529L52.500 531.500Z" fill="#fff" stroke="#2848b8" stroke-width=".6"/><path d="M47 535.500H63" stroke="#b08020" stroke-width="1.600"/>
<path d="M53 531L61 522.500L63 524.500L55 533L52.500 533.500Z" fill="#f0a030" stroke="#a86010" stroke-width=".7"/><path d="M60 523.500L62 525.500" stroke="#d02020" stroke-width="1.600"/>
<rect x="99.500" y="523.500" width="11" height="12" fill="#fff" stroke="#3878c8" stroke-width="1.100"/><path d="M101 522V525M103 522V525M105 522V525M107 522V525M109 522V525" stroke="#506080" stroke-width=".8"/><path d="M101.500 528.500H108M101.500 530.500H108M101.500 532.500H108" stroke="#a0b8d8" stroke-width=".8"/>
<path d="M104 526.500H113V525L116 529L113 533V531H109V528.500H104Z" fill="#2878d8" stroke="#1858a8" stroke-width=".5" transform="rotate(-90 109 529) translate(1 1)"/>
<path d="M156.500 521.500L164 534.500H149Z" fill="#ffe030" stroke="#c8a000" stroke-width="1.200" stroke-linejoin="round"/><path d="M156.500 525.500V530.500" stroke="#202020" stroke-width="1.800" stroke-linecap="round"/><circle cx="156.500" cy="532.500" r="1" fill="#202020"/>
</svg>
<div id="rpanel">
<!-- coords relative to (712,158) -->
<div class="btn" style="left:6px;top:1px;width:246px;height:23px;line-height:21px;color:#d40000;border-radius:4px;padding-right:16px">浮动坐标系<span class="dn" style="left:231px;top:9px"></span></div>
<!-- jog arrows -->
<div class="jog" style="left:85px;top:27px"><svg width="32" height="32" viewBox="0 0 32 32"><defs><linearGradient id="jb" x1="0" y1="0" x2="1" y2="1"><stop offset="0" stop-color="#0030c8"/><stop offset="1" stop-color="#000070"/></linearGradient></defs><path d="M16.5 3.5L30 18H21.5V27H11V18H3Z" fill="url(#jb)"/></svg></div>
<div class="jog" style="left:35px;top:60px"><svg width="32" height="32" viewBox="0 0 32 32"><path d="M4 15.5L18 2V10H27V21H18V29Z" fill="url(#jb)"/></svg></div>
<div class="jog" style="left:139px;top:60px"><svg width="32" height="32" viewBox="0 0 32 32"><path d="M28 15.5L14 2V10H5V21H14V29Z" fill="url(#jb)"/></svg></div>
<div class="jog" style="left:85px;top:93px"><svg width="32" height="32" viewBox="0 0 32 32"><path d="M16.5 28L30 14H21.5V5H11V14H3Z" fill="url(#jb)"/></svg></div>
<div class="jog" style="left:189px;top:27px"><svg width="32" height="32" viewBox="0 0 32 32"><defs><linearGradient id="noz" x1="0" y1="0" x2="1" y2="0"><stop offset="0" stop-color="#8a8a8a"/><stop offset=".45" stop-color="#f2f2f2"/><stop offset="1" stop-color="#707070"/></linearGradient></defs><rect x="7" y="3" width="9" height="10" fill="url(#noz)"/><rect x="6" y="13" width="11" height="4" fill="url(#noz)"/><rect x="8" y="17" width="7" height="6" fill="url(#noz)"/><path d="M8.500 23h6l-3 4.500z" fill="#e8a000"/><path d="M23.500 10V23" stroke="#0000ff" stroke-width="2"/><path d="M23.500 5.500l3.500 7h-7z" fill="#0000ff"/></svg></div>
<div class="jog" style="left:189px;top:94px"><svg width="32" height="32" viewBox="0 0 32 32"><rect x="7" y="3" width="9" height="10" fill="url(#noz)"/><rect x="6" y="13" width="11" height="4" fill="url(#noz)"/><rect x="8" y="17" width="7" height="6" fill="url(#noz)"/><path d="M8.500 23h6l-3 4.500z" fill="#e8a000"/><path d="M23.500 5V19" stroke="#0000ff" stroke-width="2"/><path d="M23.500 24l3.500-7h-7z" fill="#0000ff"/></svg></div>
<div class="btn" style="left:12px;top:106px;width:49px;height:20px;line-height:18px">预览</div>
<!-- options -->
<div class="cb" style="left:14px;top:137px"></div><div class="lbl" style="left:30px;top:138px">快速</div>
<div class="combo" style="left:57px;top:133px;width:58px;height:19px;line-height:15px;padding-left:3px">20mm/s<i></i><span class="dn" style="left:45px;top:7px"></span></div>
<div class="cb" style="left:143px;top:137px"></div><div class="lbl" style="left:159px;top:138px">步进</div>
<div class="combo" style="left:193px;top:133px;width:50px;height:19px;line-height:15px;padding-left:8px">50mm<i></i><span class="dn" style="left:37px;top:7px"></span></div>
<div class="cb" style="left:14px;top:158px"></div><div class="lbl" style="left:30px;top:159px">点动切割</div>
<div class="lbl" style="left:88px;top:158px;color:#0000a0;font-weight:bold;font-size:14px;letter-spacing:0.5px">···</div>
<div class="lbl" style="left:137px;top:159px">点射功率:</div>
<div class="combo" style="left:193px;top:156px;width:50px;height:19px;line-height:15px;padding-left:8px">100%<i></i><span class="dn" style="left:37px;top:7px"></span></div>
<!-- mark row -->
<div class="btn" style="left:11px;top:201px;width:78px;height:23px;line-height:21px">标记坐标</div>
<div class="btn" style="left:93px;top:201px;width:78px;height:23px;line-height:21px">返回标记</div>
<div class="btn" style="left:175px;top:201px;width:78px;height:23px;line-height:21px;padding-left:6px">标记1<span class="dn" style="left:62px;top:9px"></span><span class="abs" style="left:7px;top:7px;width:13px;height:9px;background:linear-gradient(135deg,#9cc4f4,#3c78d8);border:1px solid #3868c0;border-radius:2px"></span></div>
<div class="btn" style="left:11px;top:226px;width:78px;height:26px;line-height:24px;padding-left:21px">光闸<span class="led" style="left:6px;top:5px"></span></div>
<div class="btn" style="left:93px;top:226px;width:78px;height:26px;line-height:24px;padding-left:21px">红光<span class="led" style="left:6px;top:5px"></span></div>
<div class="btn" style="left:175px;top:226px;width:78px;height:26px;line-height:24px;padding-left:21px">激光<span class="led" style="left:6px;top:5px"></span></div>
<div class="btn" style="left:11px;top:255px;width:78px;height:26px;line-height:24px;padding-left:21px">跟随<span class="led" style="left:6px;top:5px"></span></div>
<div class="btn" style="left:93px;top:255px;width:78px;height:26px;line-height:24px;padding-left:21px">吹气<span class="led" style="left:6px;top:5px"></span></div>
<div class="btn" style="left:175px;top:255px;width:78px;height:26px;line-height:24px;padding-right:14px">空气<span class="dn" style="left:62px;top:10px"></span></div>
<!-- group box -->
<div class="abs" style="left:4px;top:294px;width:259px;height:220px;border:1px solid #dcdcdc;border-radius:3px;box-shadow:inset 1px 1px 0 #fff"></div>
<div class="lbl" style="left:8px;top:290px;background:#f0f0f0;padding:0 2px">加工控制</div>
<div class="btn" style="left:10px;top:311px;width:78px;height:27px;line-height:25px;padding-left:21px">开始*</div>
<div class="btn off" style="left:92px;top:311px;width:78px;height:27px;line-height:25px;padding-left:21px">暂停</div>
<div class="btn" style="left:174px;top:311px;width:78px;height:27px;line-height:25px;padding-left:21px">停止</div>
<div class="btn" style="left:10px;top:342px;width:78px;height:27px;line-height:25px;padding-left:21px">走边框</div>
<div class="btn" style="left:92px;top:342px;width:78px;height:27px;line-height:25px;padding-left:21px">模拟</div>
<div class="btn" style="left:174px;top:342px;width:78px;height:27px;line-height:25px;padding-left:21px">空走</div>
<div class="btn" style="left:10px;top:372px;width:78px;height:27px;line-height:25px;padding-left:21px;border-color:#505050">循环加工</div>
<div class="btn off" style="left:92px;top:372px;width:78px;height:27px;line-height:25px;padding-left:21px">断点定位</div>
<div class="btn off" style="left:174px;top:372px;width:78px;height:27px;line-height:25px;padding-left:21px">断点继续</div>
<div class="btn off" style="left:10px;top:402px;width:78px;height:27px;line-height:25px;padding-left:21px">回退</div>
<div class="btn off" style="left:92px;top:402px;width:78px;height:27px;line-height:25px;padding-left:21px">前进</div>
<div class="btn" style="left:174px;top:402px;width:78px;height:27px;line-height:25px">回零</div>
<div class="cb" style="left:13px;top:440px"></div><div class="lbl" style="left:29px;top:442px">加工完成自动返回</div>
<div class="cb" style="left:13px;top:456px"></div><div class="lbl" style="left:29px;top:458px">单击停止自动回零</div>
<div class="cb" style="left:13px;top:472px"></div><div class="lbl" style="left:29px;top:474px">只加工选中的图形</div>
<div class="cb" style="left:13px;top:488px"></div><div class="lbl" style="left:29px;top:490px">启用软限位保护</div>
<div class="combo" style="left:159px;top:437px;width:92px;height:22px;line-height:18px;padding-top:2px;padding-left:3px;border-color:#505050;font-family:'Liberation Sans','Noto Sans CJK SC',sans-serif;font-size:12px">零点<i style="width:18px;border-left:none"></i><span class="dn" style="left:78px;top:9px"></span></div>
<svg class="abs" style="left:0;top:0" width="280" height="508" viewBox="712 158 280 508">
<defs><radialGradient id="pStop" cx=".4" cy=".35" r=".7"><stop offset="0" stop-color="#ff5050"/><stop offset="1" stop-color="#c80000"/></radialGradient>
<linearGradient id="pFrame" x1="0" y1="0" x2="1" y2="1"><stop offset="0" stop-color="#f4f4ff"/><stop offset="1" stop-color="#c8c8f8"/></linearGradient></defs>
<!-- start -->
<path d="M733.500 476.500L740 482L733.500 487.500Z" fill="#1858c8" stroke="#1048a8" stroke-width=".8" stroke-linejoin="round"/>
<!-- pause (disabled) -->
<rect x="813" y="477" width="3.600" height="10" fill="#b4b4b4"/><rect x="819" y="477" width="3.600" height="10" fill="#b4b4b4"/>
<!-- stop -->
<circle cx="899.500" cy="481.500" r="7.500" fill="url(#pStop)"/><path d="M896.300 478.300L902.700 484.700M902.700 478.300L896.300 484.700" stroke="#fff" stroke-width="2.400"/>
<!-- frame -->
<rect x="729.500" y="507.500" width="13" height="12" fill="url(#pFrame)" stroke="#8080e0"/><path d="M733 516.500Q731.500 512 735 511.500Q736 510 738 511.500Q740.500 511 740 514Q741 517 737 517Z" fill="#3050d8"/><path d="M734 506H738.500M736.500 504L738.500 506L736.500 508" fill="none" stroke="#2848c8" stroke-width=".9"/>
<!-- simulate -->
<path d="M815.500 508L822 512.700L815.500 517.500Z" fill="#f4fff4" stroke="#0a6a0a" stroke-width="1.300" stroke-linejoin="round"/>
<!-- dry run -->
<path d="M897.500 508L904 512.700L897.500 517.500Z" fill="#f4f8ff" stroke="#1858c8" stroke-width="1.300" stroke-linejoin="round"/>
<!-- loop -->
<path d="M735 540H733Q730.500 540 730.500 542.500V544.500Q730.500 547 733 547H734.500" fill="none" stroke="#188a18" stroke-width="1.700"/><path d="M738 547.500H740Q742.500 547.500 742.500 545V543Q742.500 540.500 740 540.500H738.500" fill="none" stroke="#188a18" stroke-width="1.700"/><path d="M734 537.500L737 540L734 542.500Z M739 545L736 547.500L739 550Z" fill="#188a18"/>
<!-- bp locate (disabled) -->
<path d="M811 543.500H818M816 541.500L818.500 543.500L816 545.500" fill="none" stroke="#a8a8a8" stroke-width="1.100"/><path d="M821 540V547.500M824 540V547.500" stroke="#a8a8a8" stroke-width="1.500"/>
<!-- bp continue (disabled) -->
<rect x="894" y="539.500" width="3.200" height="8.500" fill="#a8a8a8"/><path d="M899.500 539.500L906 543.700L899.500 548Z" fill="#a8a8a8"/>
<!-- back (disabled) -->
<path d="M746.500 568L741 573.500L746.500 579L748.500 577L745 573.500L748.500 570Z M752.500 568L747.500 573.500L752.500 579L754 577V570Z" fill="#c4c4c4" stroke="#a0a0a0" stroke-width=".7"/>
<!-- forward (disabled) -->
<path d="M829.500 568L835 573.500L829.500 579L827.500 577L831 573.500L827.500 570Z M823.500 568L828.500 573.500L823.500 579L822 577V570Z" fill="#c4c4c4" stroke="#a0a0a0" stroke-width=".7"/>
<!-- checks -->
<path d="M728.300 604.500L730.500 608L735 601" fill="none" stroke="#3050a0" stroke-width="1.700"/><path d="M728.300 620.500L730.500 624L735 617" fill="none" stroke="#3050a0" stroke-width="1.700"/>
</svg>
<!-- h scrollbar -->
<div class="abs" style="left:0;top:492px;width:264px;height:16px;background:#f0f0f0"></div>
<div class="abs" style="left:18px;top:493px;width:223px;height:15px;border:1px solid #989898;border-radius:2px;background:linear-gradient(#f6f6f6,#e4e4e4 48%,#d0d0d0 52%,#dcdcdc)"></div>
<div class="abs" style="left:126px;top:497px;width:7px;height:7px;background:repeating-linear-gradient(90deg,#606060 0 1px,transparent 1px 2px)"></div>
<div class="abs" style="left:5px;top:496px;width:0;height:0;border:4px solid transparent;border-right:5px solid #404040;border-left:none"></div>
<div class="abs" style="left:253px;top:496px;width:0;height:0;border:4px solid transparent;border-left:5px solid #404040;border-right:none"></div>
<!-- v scrollbar -->
<div class="abs" style="left:264px;top:0;width:16px;height:492px;background:#f0f0f0"></div>
<div class="abs" style="left:264px;top:18px;width:15px;height:348px;border:1px solid #989898;border-radius:2px;background:linear-gradient(90deg,#f6f6f6,#e4e4e4 48%,#d0d0d0 52%,#dcdcdc)"></div>
<div class="abs" style="left:268px;top:188px;width:7px;height:7px;background:repeating-linear-gradient(#606060 0 1px,transparent 1px 2px)"></div>
<div class="abs" style="left:268px;top:6px;width:0;height:0;border:4px solid transparent;border-bottom:5px solid #404040;border-top:none"></div>
<div class="abs" style="left:268px;top:481px;width:0;height:0;border:4px solid transparent;border-top:5px solid #404040;border-bottom:none"></div>
</div>
<div id="status">
<div class="abs" style="left:505px;top:2px;width:1px;height:22px;background:#b4b9c1"></div>
<div class="abs" style="left:609px;top:2px;width:1px;height:22px;background:#b4b9c1"></div>
<div class="lbl" style="left:514px;top:7px;color:#1e2b3c;font-size:11.4px">3244.90, 2785.71</div>
<div class="lbl" style="left:614px;top:7px;color:#1e2b3c">停止</div>
<div class="btn" style="left:667px;top:2px;width:152px;height:22px;line-height:20px;text-align:left;padding-left:27px;color:#1e2b3c;font-size:11px">X:0.000 Y:0.000<span class="dn" style="left:134px;top:8px"></span></div>
<div class="lbl" style="left:827px;top:7px;color:#1e2b3c">微调</div>
<div class="abs" style="left:861px;top:3px;width:61px;height:20px;background:#fff;border:1px solid #c8ccd2"></div>
<div class="lbl" style="left:864px;top:7px;color:#777;font-size:11.5px">10</div>
<div class="lbl" style="left:926px;top:7px;color:#1e2b3c;font-size:12px">Demo</div>
<div class="abs" style="left:906px;top:11px;width:0;height:0;border:3px solid transparent;border-top:3px solid #8a8e94;border-bottom:none"></div>
</div>
<div class="abs" style="left:846px;top:660px;font-size:37px;font-weight:bold;letter-spacing:-1.5px;color:rgba(255,255,255,.8);white-space:nowrap;line-height:37px">UEBUG</div>
<div class="abs" style="left:962px;top:674px;font-size:17px;font-weight:bold;letter-spacing:-0.5px;color:rgba(255,255,255,.8);white-space:nowrap;line-height:17px">.com</div>
<div class="abs" style="left:966px;top:666px;font-size:8px;color:rgba(255,255,255,.75);white-space:nowrap;line-height:9px;background:rgba(255,255,255,.3);padding:0 1px">下载站</div>
</div>
</body>
</html>
